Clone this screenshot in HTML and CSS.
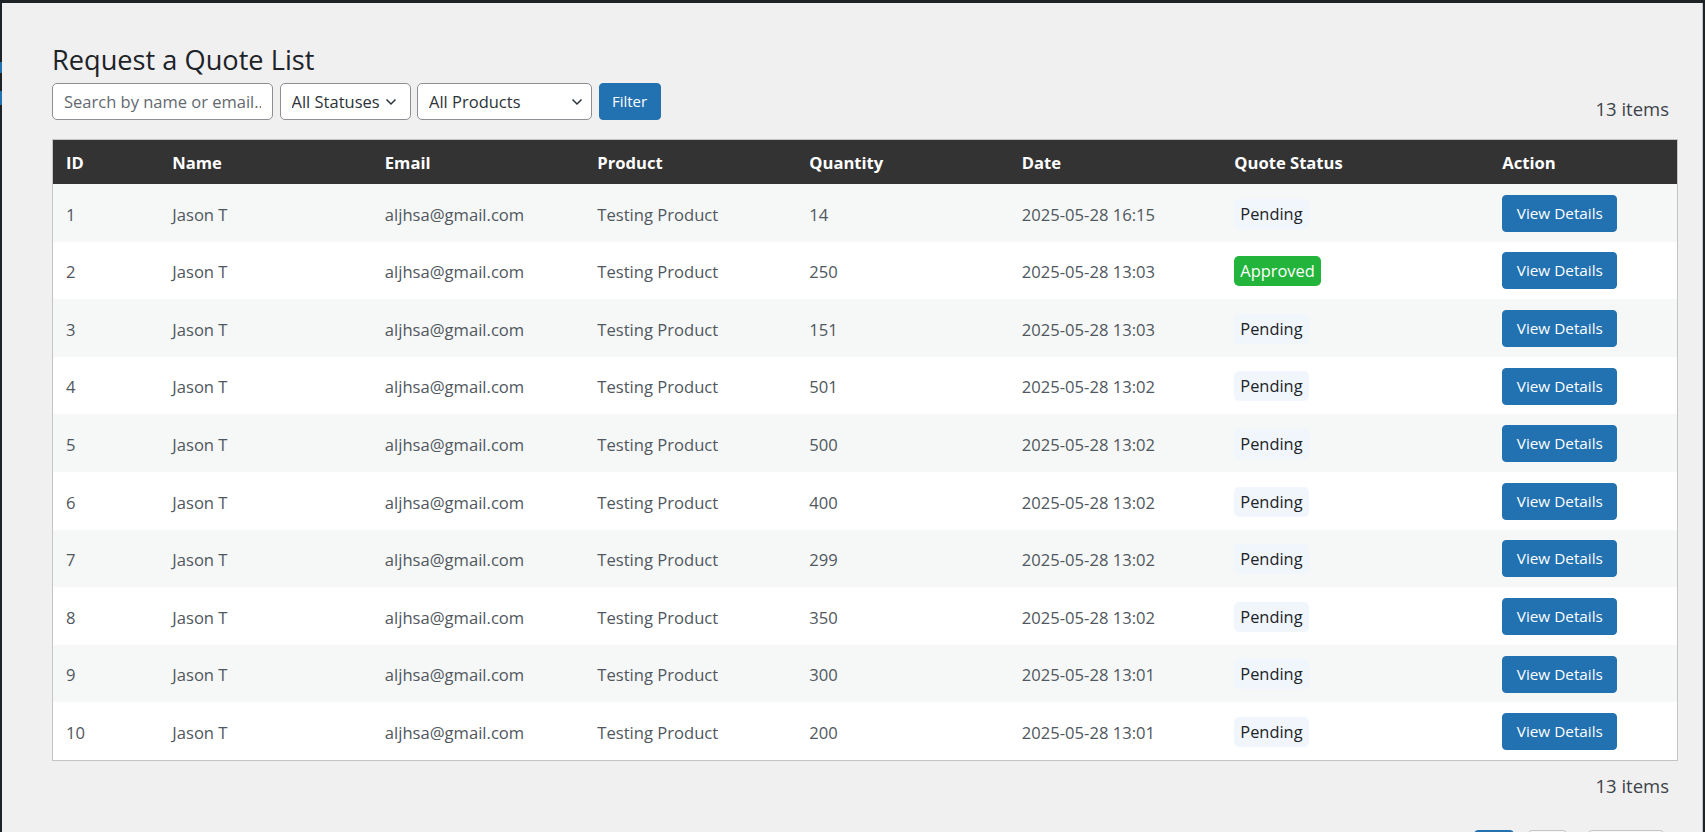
FILE: index.html
```html
<!DOCTYPE html>
<html lang="en">
<head>
<meta charset="utf-8">
<title>Request a Quote List</title>
<link rel="stylesheet" href="styles.css">
</head>
<body>
<div class="adminbar"></div>
<div class="shell">
  <aside class="sidemenu">
    <span class="mark mark-a"></span>
    <span class="mark mark-b"></span>
  </aside>
  <main class="content">
    <h1 class="page-title">Request a Quote List</h1>

    <div class="tablenav top">
      <form class="filters">
        <input class="field search" type="text" placeholder="Search by name or email...">
        <span class="select-wrap status">
          <select class="field select">
            <option>All Statuses</option>
            <option>Pending</option>
            <option>Approved</option>
          </select>
          <svg class="chevron" width="12" height="8" viewBox="0 0 12 8"><path d="M1.5 1.5 6 6 10.5 1.5" fill="none" stroke="#2c3338" stroke-width="1.5"/></svg>
        </span>
        <span class="select-wrap products">
          <select class="field select">
            <option>All Products</option>
            <option>Testing Product</option>
          </select>
          <svg class="chevron" width="12" height="8" viewBox="0 0 12 8"><path d="M1.5 1.5 6 6 10.5 1.5" fill="none" stroke="#2c3338" stroke-width="1.5"/></svg>
        </span>
        <button class="btn filter-btn" type="button">Filter</button>
      </form>
      <div class="count">13 items</div>
    </div>

    <table class="quotes">
      <colgroup>
        <col class="c-id"><col class="c-name"><col class="c-email"><col class="c-product">
        <col class="c-qty"><col class="c-date"><col class="c-status"><col class="c-action">
      </colgroup>
      <thead>
        <tr>
          <th>ID</th><th>Name</th><th>Email</th><th>Product</th>
          <th>Quantity</th><th>Date</th><th>Quote Status</th><th>Action</th>
        </tr>
      </thead>
      <tbody>
        <tr><td>1</td><td>Jason T</td><td>aljhsa@gmail.com</td><td>Testing Product</td><td>14</td><td>2025-05-28 16:15</td><td><span class="badge pending">Pending</span></td><td><a class="btn view-btn">View Details</a></td></tr>
        <tr><td>2</td><td>Jason T</td><td>aljhsa@gmail.com</td><td>Testing Product</td><td>250</td><td>2025-05-28 13:03</td><td><span class="badge approved">Approved</span></td><td><a class="btn view-btn">View Details</a></td></tr>
        <tr><td>3</td><td>Jason T</td><td>aljhsa@gmail.com</td><td>Testing Product</td><td>151</td><td>2025-05-28 13:03</td><td><span class="badge pending">Pending</span></td><td><a class="btn view-btn">View Details</a></td></tr>
        <tr><td>4</td><td>Jason T</td><td>aljhsa@gmail.com</td><td>Testing Product</td><td>501</td><td>2025-05-28 13:02</td><td><span class="badge pending">Pending</span></td><td><a class="btn view-btn">View Details</a></td></tr>
        <tr><td>5</td><td>Jason T</td><td>aljhsa@gmail.com</td><td>Testing Product</td><td>500</td><td>2025-05-28 13:02</td><td><span class="badge pending">Pending</span></td><td><a class="btn view-btn">View Details</a></td></tr>
        <tr><td>6</td><td>Jason T</td><td>aljhsa@gmail.com</td><td>Testing Product</td><td>400</td><td>2025-05-28 13:02</td><td><span class="badge pending">Pending</span></td><td><a class="btn view-btn">View Details</a></td></tr>
        <tr><td>7</td><td>Jason T</td><td>aljhsa@gmail.com</td><td>Testing Product</td><td>299</td><td>2025-05-28 13:02</td><td><span class="badge pending">Pending</span></td><td><a class="btn view-btn">View Details</a></td></tr>
        <tr><td>8</td><td>Jason T</td><td>aljhsa@gmail.com</td><td>Testing Product</td><td>350</td><td>2025-05-28 13:02</td><td><span class="badge pending">Pending</span></td><td><a class="btn view-btn">View Details</a></td></tr>
        <tr><td>9</td><td>Jason T</td><td>aljhsa@gmail.com</td><td>Testing Product</td><td>300</td><td>2025-05-28 13:01</td><td><span class="badge pending">Pending</span></td><td><a class="btn view-btn">View Details</a></td></tr>
        <tr><td>10</td><td>Jason T</td><td>aljhsa@gmail.com</td><td>Testing Product</td><td>200</td><td>2025-05-28 13:01</td><td><span class="badge pending">Pending</span></td><td><a class="btn view-btn">View Details</a></td></tr>
      </tbody>
    </table>

    <div class="tablenav bottom">
      <div class="count">13 items</div>
    </div>

    <nav class="pagination" aria-label="Pages">
      <a class="page current" aria-label="Page 1"></a>
      <a class="page" aria-label="Page 2"></a>
      <a class="page next" aria-label="Next page"></a>
    </nav>
  </main>
  <div class="edge"></div>
</div>
</body>
</html>
```

FILE: styles.css
```css
* { box-sizing: border-box; }

html, body {
  margin: 0;
  padding: 0;
}

body {
  background: #f0f0f1;
  font-family: "Open Sans", "Noto Sans", sans-serif;
  color: #3c434a;
  height: 832px;
  overflow: hidden;
}

/* top toolbar edge */
.adminbar {
  height: 3px;
  background: #1d2327;
}

.shell {
  display: flex;
  min-height: 829px;
}

/* collapsed side menu strip */
.sidemenu {
  flex: none;
  width: 2px;
  background: #1d2327;
  display: flex;
  flex-direction: column;
}

.sidemenu .mark {
  display: block;
  background: #2271b1;
}

.mark-a { margin-top: 59px; height: 11px; }
.mark-b { margin-top: 18px; height: 14px; }

.content {
  flex: 1;
  min-width: 0;
  padding: 40px 24px 0 50px;
}

.edge {
  flex: none;
  width: 3px;
  border-left: 1px solid #c3c4c7;
  background: #1d2327;
}

.page-title {
  margin: 0;
  font-size: 27.2px;
  line-height: 34px;
  font-weight: 400;
  color: #1d2327;
}

/* filter bar */
.tablenav {
  display: flex;
  justify-content: space-between;
}

.tablenav.top {
  margin-top: 6px;
  height: 36.5px;
}

.filters {
  display: flex;
  gap: 6.5px;
  margin: 0;
}

.field {
  height: 36.5px;
  border: 1px solid #8c8f94;
  border-radius: 5px;
  background: #fff;
  font-family: inherit;
  font-size: 16.5px;
  color: #2c3338;
  margin: 0;
}

.search {
  width: 221px;
  padding: 0 11px;
}

.search::placeholder {
  color: #646970;
  opacity: 1;
}

.select-wrap {
  position: relative;
  display: block;
}

.select {
  appearance: none;
  -webkit-appearance: none;
  padding: 0 30px 0 11px;
  width: 100%;
}

.select-wrap.status { width: 131px; }
.select-wrap.products { width: 175px; }

.chevron {
  position: absolute;
  top: 14.5px;
  pointer-events: none;
}

.status .chevron { right: 14px; }
.products .chevron { right: 9px; }

.btn {
  display: inline-block;
  background: #2271b1;
  border: 1px solid #2271b1;
  border-radius: 4px;
  color: #fff;
  font-family: inherit;
  text-decoration: none;
}

.filter-btn {
  width: 62px;
  height: 36.5px;
  padding: 0;
  font-size: 15px;
}

.count {
  align-self: flex-end;
  font-size: 18.5px;
  line-height: 24px;
  color: #3c434a;
  margin-right: 9px;
  margin-bottom: -1.5px;
}

/* quote table */
.quotes {
  margin-top: 19.5px;
  width: 100%;
  table-layout: fixed;
  border-collapse: separate;
  border-spacing: 0;
  border: 1px solid #c3c4c7;
  background: #fff;
  font-size: 16.6px;
}

.c-id { width: 106.3px; }
.c-name { width: 212.5px; }
.c-email { width: 212.5px; }
.c-product { width: 212px; }
.c-qty { width: 212.5px; }
.c-date { width: 212.5px; }
.c-status { width: 268px; }
.c-action { width: 188px; }

.quotes thead tr {
  height: 44px;
  background: #333;
}

.quotes th {
  color: #fff;
  font-weight: 700;
  text-align: left;
  padding: 0 13px;
  vertical-align: middle;
}

.quotes tbody tr {
  height: 57.6px;
}

.quotes tbody tr:nth-child(odd) {
  background: #f6f7f7;
}

.quotes td {
  padding: 2.5px 13px 0;
  color: #50575e;
  vertical-align: middle;
  white-space: nowrap;
}

.badge {
  display: inline-block;
  height: 30px;
  line-height: 30px;
  padding: 0 6px;
  border-radius: 5px;
  font-size: 16.4px;
  margin-top: -1px;
}

.badge.pending {
  background: #f0f6fc;
  color: #1d2327;
}

.badge.approved {
  background: #23b43b;
  color: #fff;
}

.view-btn {
  height: 37px;
  line-height: 35px;
  padding: 0 13.5px;
  font-size: 15.3px;
  margin-top: -1.5px;
}

.tablenav.bottom {
  justify-content: flex-end;
  margin-top: 12.8px;
}

.tablenav.bottom .count {
  margin-bottom: 0;
}

/* page links */
.pagination {
  display: flex;
  justify-content: flex-end;
  gap: 14px;
  margin-top: 32px;
  padding-right: 14px;
}

.page {
  display: block;
  height: 37px;
  width: 39px;
  border: 1px solid #c3c4c7;
  border-radius: 4px;
  background: #f6f7f7;
}

.page.current {
  width: 40px;
  background: #2271b1;
  border-color: #2271b1;
}

.page.next {
  width: 76px;
  margin-left: 7px;
}
```
